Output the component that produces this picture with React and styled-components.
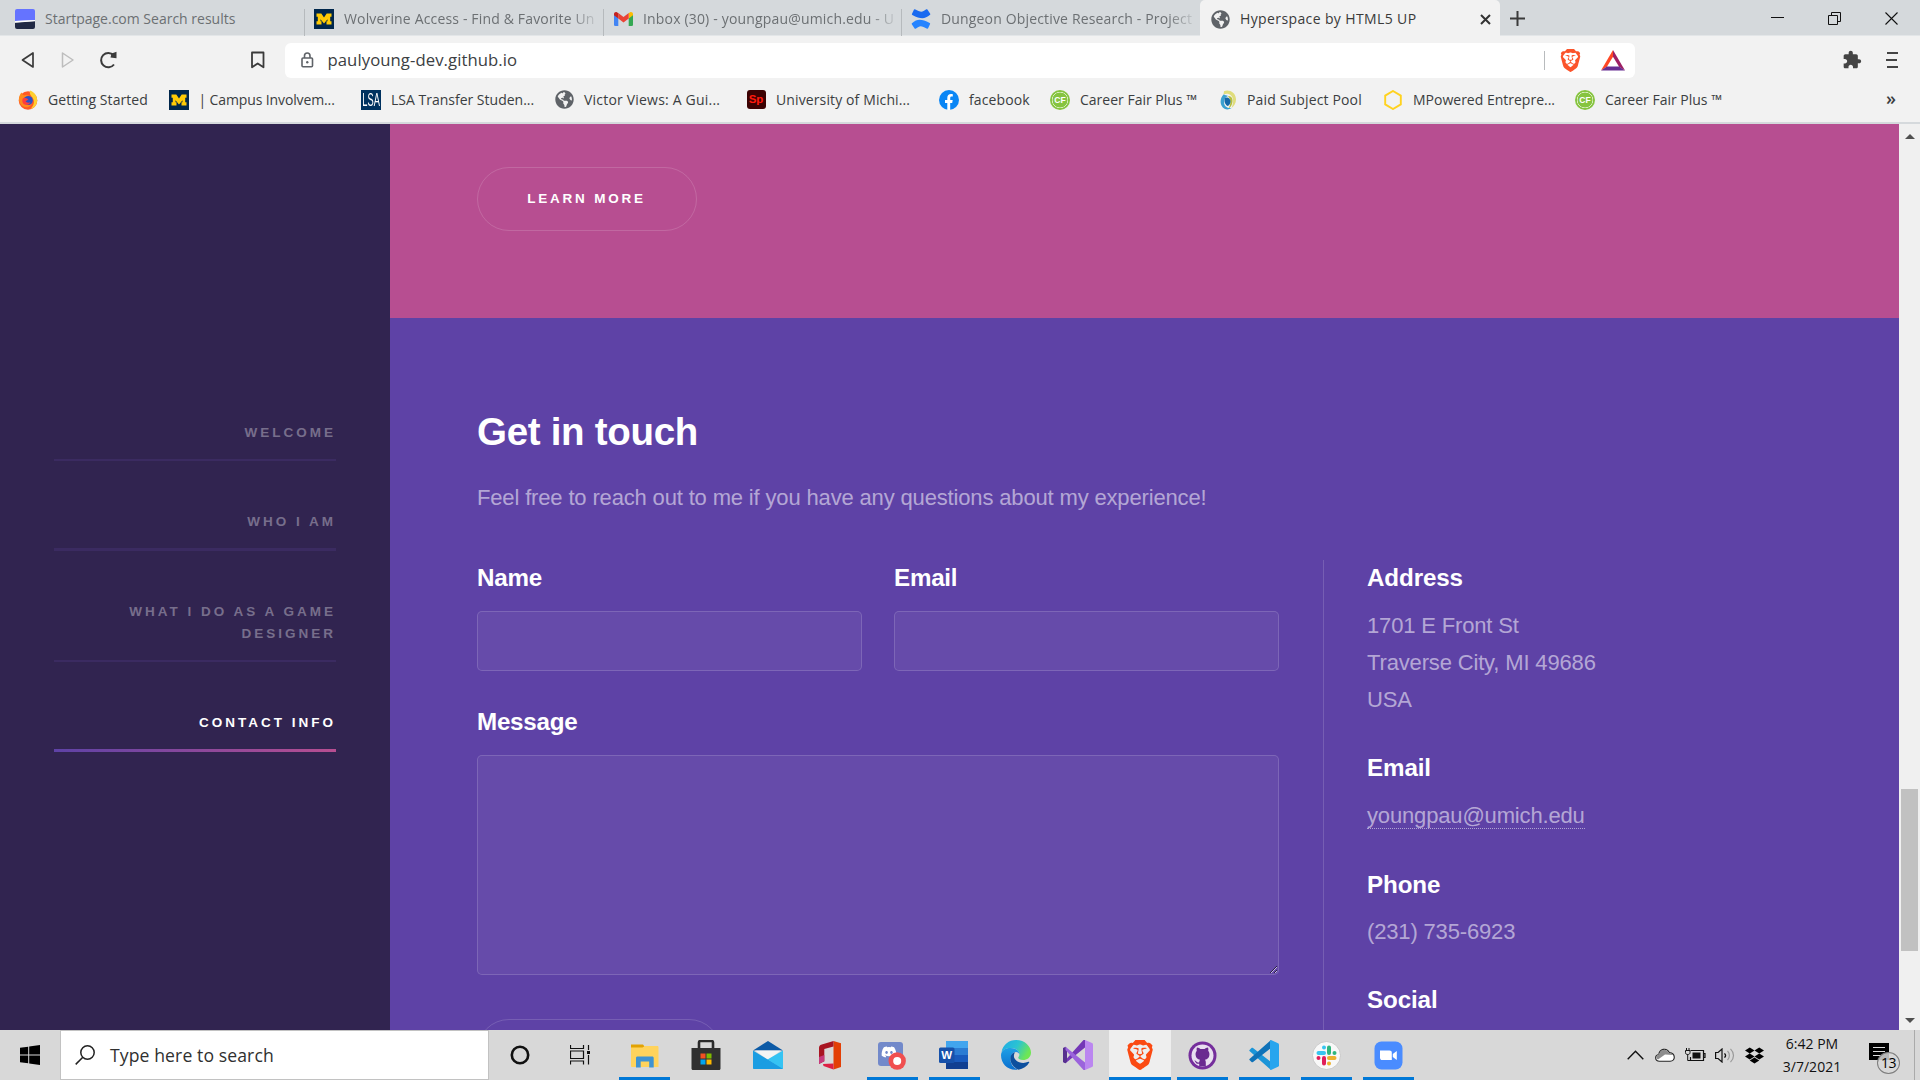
import React from "react";
import styled, { createGlobalStyle } from "styled-components";
import { FaDiscord, FaDropbox, FaGlobeAmericas } from "react-icons/fa";
import { SiBrave } from "react-icons/si";

const UI = `"Open Sans", "Noto Sans", sans-serif`;
const SITE = `"Liberation Sans", Arial, sans-serif`;

const Global = createGlobalStyle`
  * { box-sizing: border-box; }
  html, body { margin: 0; padding: 0; overflow: hidden; }
  svg { display: block; flex: none; }
`;

const Desktop = styled.div`
  display: flex;
  flex-direction: column;
  width: 1920px;
  height: 1080px;
  overflow: hidden;
  font-family: ${UI};
  background: #f2f2f2;
`;

/* ---------- tab strip ---------- */
const TabStrip = styled.div`
  display: flex;
  height: 36px;
  flex: none;
  background: #d5d9dc;
  box-shadow: inset 0 -1px 0 #e3e6e8;
`;
const Tab = styled.div`
  display: flex;
  align-items: center;
  width: ${(p) => p.$w}px;
  padding: 2px 0 0 ${(p) => p.$pl}px;
  font-size: 14px;
  color: #6c7073;
`;
const TabDivider = styled.div`
  width: 1px;
  height: 27px;
  margin-top: 9px;
  background: #b6babd;
`;
const ActiveTab = styled(Tab)`
  background: #f2f2f2;
  border-radius: 5px 5px 0 0;
  color: #3a3a3a;
  svg:last-child { margin-left: auto; margin-right: 9px; }
`;
const TabTitle = styled.span`
  margin-left: 10px;
  white-space: nowrap;
  line-height: 22px;
  letter-spacing: ${(p) => p.$ls || 0}px;
  ${(p) => p.$fade && "mask-image: linear-gradient(90deg, #000 90%, rgba(0,0,0,.2) 100%);"}
`;
const Strip = styled.div`
  display: flex;
  align-items: center;
  flex: 1;
  padding: 1px 22px 0 9px;
`;
const WindowButtons = styled.div`
  display: flex;
  gap: 44px;
  margin-left: auto;
`;

/* ---------- toolbar ---------- */
const Toolbar = styled.div`
  display: flex;
  align-items: center;
  height: 48px;
  flex: none;
  padding: 0 22px 0 20px;
`;
const NavButtons = styled.div`
  display: flex;
  align-items: center;
  width: 265px;
`;
const Slot = styled.div`
  display: flex;
  width: ${(p) => p.$w}px;
`;
const AddressBar = styled.div`
  display: flex;
  align-items: center;
  width: 1350px;
  height: 35px;
  padding: 0 10px 0 15px;
  background: #fff;
  border-radius: 6px;
`;
const Url = styled.span`
  margin-left: 12.5px;
  flex: 1;
  font-size: 16.7px;
  letter-spacing: 0.07px;
  line-height: 24px;
  color: #3c4043;
`;
const UrlDivider = styled.div`
  width: 1px;
  height: 19px;
  background: #b8bbbd;
  margin-right: 14px;
`;
const ToolbarEnd = styled.div`
  display: flex;
  align-items: center;
  gap: 24px;
  margin-left: auto;
`;

/* ---------- bookmarks ---------- */
const Bookmarks = styled.div`
  display: flex;
  align-items: center;
  height: 40px;
  flex: none;
  padding: 0 0 7px 18px;
  border-bottom: 2px solid #d5d9dc;
  font-size: 14px;
  color: #3b3e41;
`;
const Bookmark = styled.div`
  display: flex;
  align-items: center;
  gap: ${(p) => p.$gap || 10}px;
  width: ${(p) => p.$w}px;
  white-space: nowrap;
  letter-spacing: ${(p) => p.$ls || 0}px;
  line-height: 22px;
`;
const More = styled.span`
  margin-left: auto;
  margin-right: 24px;
  font-size: 18px;
  font-weight: 600;
  line-height: 18px;
  padding-bottom: 3px;
`;
const LetterTile = styled.span`
  display: flex;
  align-items: center;
  justify-content: center;
  width: ${(p) => p.$s || 20}px;
  height: ${(p) => p.$s || 20}px;
  flex: none;
  border-radius: ${(p) => p.$r || 0}px;
  background: ${(p) => p.$bg};
  color: ${(p) => p.$c};
  font: ${(p) => p.$font};
  letter-spacing: 0;
`;
const Condensed = styled.span`
  transform: scale(0.58, 1.2);
`;

/* ---------- page ---------- */
const Page = styled.div`
  display: flex;
  flex: 1;
  min-height: 0;
  font-family: ${SITE};
`;
const Sidebar = styled.nav`
  width: 390px;
  flex: none;
  background: #312450;
  padding: 298px 54px 0;
  display: flex;
  flex-direction: column;
  gap: 50px;
`;
const NavLink = styled.a`
  display: block;
  text-align: right;
  text-transform: uppercase;
  font-size: 13.5px;
  font-weight: 700;
  letter-spacing: 3px;
  line-height: 22px;
  color: ${(p) => (p.$active ? "#fff" : "rgba(255,255,255,.35)")};
  &::after {
    content: "";
    display: block;
    margin-top: 15px;
    height: ${(p) => p.$line}px;
    background: ${(p) => (p.$active ? "linear-gradient(to right, #5e42a6, #b74e91)" : "#3b2b61")};
  }
`;
const Main = styled.main`
  flex: 1;
  display: flex;
  flex-direction: column;
  overflow: hidden;
`;
const PinkSection = styled.section`
  height: 194px;
  flex: none;
  padding: 43px 87px;
  background: #b74e91;
`;
const PillButton = styled.button`
  display: flex;
  align-items: center;
  justify-content: center;
  width: ${(p) => p.$w}px;
  height: 64px;
  flex: none;
  padding: 0 1px 1px 0;
  border: 1px solid rgba(255, 255, 255, 0.15);
  border-radius: 32px;
  background: transparent;
  color: #fff;
  font: 700 13.5px/20px ${SITE};
  letter-spacing: 2.78px;
  text-transform: uppercase;
`;
const ContactSection = styled.section`
  flex: 1;
  min-height: 0;
  padding: 90px 87px 0;
  background: #5e42a6;
  color: rgba(255, 255, 255, 0.55);
  font-size: 22px;
  letter-spacing: -0.155px;
  line-height: 37px;
`;
const Heading = styled.h2`
  margin: 0;
  color: #fff;
  font-size: 38.5px;
  letter-spacing: -0.29px;
  line-height: 48px;
`;
const Intro = styled.p`
  margin: 23px 0 44px;
`;
const Columns = styled.div`
  display: flex;
  gap: 44px;
`;
const Form = styled.form`
  width: 802px;
  display: flex;
  flex-direction: column;
  gap: 33px;
`;
const FieldRow = styled.div`
  display: grid;
  grid-template-columns: 1fr 1fr;
  gap: 32px;
`;
const Field = styled.label`
  display: flex;
  flex-direction: column;
  gap: 15px;
  color: #fff;
  font-size: 24.2px;
  letter-spacing: -0.25px;
  font-weight: 700;
  line-height: 36px;
`;
const Input = styled.input`
  height: 60px;
  width: 100%;
  border: 1px solid rgba(255, 255, 255, 0.15);
  border-radius: 5px;
  background: rgba(255, 255, 255, 0.05);
  outline: 0;
`;
const TextArea = styled.textarea`
  height: 220px;
  width: 100%;
  border: 1px solid rgba(255, 255, 255, 0.15);
  border-radius: 5px;
  background: rgba(255, 255, 255, 0.05);
  outline: 0;
`;
const SubmitRow = styled.div`
  margin-top: 11px;
`;
const Details = styled.div`
  display: flex;
  flex-direction: column;
  height: 480px;
  border-left: 1px solid rgba(255, 255, 255, 0.15);
  padding-left: 43px;
`;
const Detail = styled.div`
  margin-bottom: ${(p) => p.$gap || 32.5}px;
`;
const DetailTitle = styled.h3`
  margin: 0 0 ${(p) => p.$mb || 10.5}px;
  color: #fff;
  font-size: 24.2px;
  letter-spacing: -0.13px;
  line-height: 36px;
`;
const MailLink = styled.a`
  border-bottom: 1px dotted rgba(255, 255, 255, 0.5);
`;

const Scrollbar = styled.div`
  width: 21px;
  flex: none;
  display: flex;
  flex-direction: column;
  align-items: center;
  background: #f0f0f0;
  padding: 10px 0 7px;
`;
const Thumb = styled.div`
  width: 17px;
  height: 162px;
  margin: 650px 0 auto;
  background: #c1c1c1;
`;

/* ---------- taskbar ---------- */
const Taskbar = styled.div`
  display: flex;
  height: 50px;
  flex: none;
  background: #d8d8d8;
  align-items: stretch;
`;
const StartButton = styled.div`
  width: 60px;
  display: flex;
  align-items: center;
  padding-left: 20px;
`;
const SearchBox = styled.div`
  width: 429px;
  display: flex;
  align-items: center;
  gap: 15px;
  padding: 0 0 0 14px;
  border: 1px solid #c2c2c2;
  background: #fff;
  color: #303030;
  font-size: 17.6px;
  letter-spacing: 0.1px;
  line-height: 24px;
`;
const TaskCell = styled.div`
  width: ${(p) => p.$w || 62}px;
  margin-right: ${(p) => p.$mr || 0}px;
  display: flex;
  align-items: center;
  justify-content: center;
  background: ${(p) => (p.$active ? "#eeeeee" : "transparent")};
  box-shadow: ${(p) => (p.$active ? "inset 0 -3px 0 #0078d7" : "none")};
`;
const Running = styled.div`
  display: flex;
  align-items: center;
  justify-content: center;
  width: 51px;
  height: 100%;
  box-shadow: inset 0 -3px 0 #0078d7;
`;
const Tray = styled.div`
  display: flex;
  align-items: center;
  margin-left: auto;
  padding-right: 5px;
`;
const TrayIcon = styled.div`
  display: flex;
  width: ${(p) => p.$w}px;
`;
const Clock = styled.div`
  width: 64px;
  margin-left: 16px;
  text-align: center;
  font-size: 14px;
  line-height: 23.5px;
  color: #111;
  white-space: nowrap;
`;
const Notice = styled.div`
  position: relative;
  width: 32px;
  height: 24px;
  margin-left: 25px;
  margin-right: 13px;
`;
const Badge = styled.span`
  position: absolute;
  left: 8px;
  top: 9px;
  width: 23px;
  height: 22px;
  border: 1px solid #7d7d7d;
  border-radius: 50%;
  background: rgba(216, 216, 216, 0.85);
  color: #000;
  font-size: 14px;
  letter-spacing: -0.5px;
  line-height: 20px;
  text-align: center;
`;
const ShowDesktop = styled.div`
  width: 1px;
  height: 50px;
  background: #aaa;
`;

/* ---------- drawings ---------- */
const Svg = ({ w, h = w, box = `0 0 ${w} ${h}`, children, ...r }) => (
  <svg width={w} height={h} viewBox={box} fill="none" {...r}>{children}</svg>
);
const StartpageIcon = () => (
  <Svg w={20}>
    <path d="M0 12V2a2 2 0 012-2h16a2 2 0 012 2v9z" fill="#6573ff" />
    <path d="M0 13.500L20 12V18a2 2 0 01-2 2H2a2 2 0 01-2-2z" fill="#202945" />
    <path d="M0 12L20 11v1.300L0 13.800z" fill="#fff" />
  </Svg>
);
const MichiganIcon = () => (
  <Svg w={20}>
    <path d="M0 0h20v20H0z" fill="#00274c" />
    <path d="M2.500 4.500h4.800L10 8.600l2.700-4.100h4.800v3.200h-1.300v4.600h1.300v3.200h-5v-3.200h1V10.200L10 14.500 6.500 10.200v2.100h1v3.200h-5v-3.200h1.300V7.700H2.500z" fill="#ffcb05" />
  </Svg>
);
const GmailIcon = () => (
  <Svg w={19} h={14}>
    <path d="M0 2v10.700A1.300 1.300 0 001.300 14H4.300V6z" fill="#4285f4" />
    <path d="M19 2v10.700A1.300 1.300 0 0117.700 14H14.700V6z" fill="#34a853" />
    <path d="M14.700 1.100V6.500L19 3.200V2c0-1.700-1.900-2.500-3.100-1.600z" fill="#fbbc04" />
    <path d="M4.300 6.500V1.100L9.500 5l5.200-3.900v5.400L9.500 10.400z" fill="#ea4335" />
    <path d="M0 2v1.200l4.300 3.300V1.100L3.100.4C1.900-.5 0 .3 0 2z" fill="#c5221f" />
  </Svg>
);
const ConfluenceIcon = () => (
  <Svg w={20}>
    <path d="M.8 15.200l2.800 4.300c.3.400.7.500 1.100.2C8 17.500 9 16.500 12.500 18l3.600 1.700c.4.200.9 0 1-.400l2-4.200c.2-.400 0-.8-.4-1C10.500 10 6.500 9.500.9 14.300c-.3.300-.3.600-.1.900z" fill="#2684ff" />
    <path d="M19.200 4.800L16.400.5c-.3-.4-.7-.5-1.100-.2C12 2.500 11 3.500 7.500 2L3.900.3c-.4-.2-.9 0-1 .4l-2 4.200c-.2.400 0 .8.4 1C9.500 10 13.500 10.500 19.100 5.700c.3-.3.300-.6.100-.9z" fill="#1a6af0" />
  </Svg>
);
const FirefoxIcon = () => (
  <Svg w={20}>
    <circle cx="10" cy="10.500" r="9.300" fill="#ff5a26" />
    <path d="M12 .5c5 2 7.300 6 7.200 10-.2 4-2.500 7.500-6.700 8.500 3-3 4.500-7 2.500-10.500C13.500 6 11 4 12 .5z" fill="#ffcf2e" />
    <path d="M1 8C1.500 5.500 2 4 3.500 2.500 4 4 5 5 6.500 5.500c2-1 5 0 6.500 2s2 6-1 8.500-8 1-9.500-2S.7 10 1 8z" fill="#ff8a1d" />
    <circle cx="10.200" cy="10.500" r="4.600" fill="#2c52c9" />
    <path d="M5 8.200c2-.6 3.500 0 5.500 1-1 .5-1.500 1.300-3 1.800 1 2 3.500 2 5 1-1 3-5 4-7.300 1.500C4 12 4 9.500 5 8.200z" fill="#ff3d3d" />
  </Svg>
);
const FacebookIcon = () => (
  <Svg w={20}>
    <circle cx="10" cy="10" r="10" fill="#0a86f5" />
    <path d="M8.300 20v-7H6v-3h2.300V8c0-2.600 1.400-4 3.700-4 .9 0 1.800.2 1.800.2v2.400h-1.200c-1.100 0-1.400.7-1.400 1.400v2h2.500l-.5 3h-2v7z" fill="#fff" />
  </Svg>
);
const SwirlIcon = () => (
  <Svg w={18} h={20} box="1 0 18 20">
    <path d="M6 1.200C11-.8 17.500 2 18 9c.2 4-2 7-4.500 9C15.500 13 16 8.500 13 5.500 11 3.500 8 3.500 5.500 4.500z" fill="#e0dd7c" />
    <path d="M10 6c4-.5 5.500 4 4 8-.7 2-2 3.500-3.500 4.500C13 14 13 10 10 6z" fill="#b7bf3f" />
    <path d="M5.500 4.500C1.500 8.500 1.500 15.500 6.500 18.800c2.500 1 5 .7 7-.8-4.500.5-7.500-2-7.500-6 0-3 1.500-5 4-6-1.500-.8-3-.9-4.500-1.500z" fill="#3ba0cf" />
    <path d="M6.800 8c2.700-1.700 5.700.3 5.700 3.500 0 2.300-1.500 4-3 4.500-2.200-1.500-3.700-4-2.700-8z" fill="#1668a8" />
  </Svg>
);
const HexIcon = () => (
  <Svg w={20}><path d="M10 1l7.800 4.600v8.800L10 19l-7.800-4.600V5.600z" stroke="#ffd21f" strokeWidth="1.900" /></Svg>
);
const CareerIcon = () => (
  <LetterTile $bg="radial-gradient(circle, #86c440 0 7.300px, #d5ebba 7.600px 8px, #86c440 8.400px)" $c="#fff" $r={10} $font={`700 8.500px/20px ${SITE}`}>CF</LetterTile>
);
const BatIcon = () => (
  <Svg w={24} h={21}>
    <path d="M12 0v6.800L5.900 16.800 0 20.500z" fill="#ff4724" />
    <path d="M12 0l12 20.500-5.900-3.700L12 6.800z" fill="#9e1f63" />
    <path d="M0 20.500l5.900-4h12.200l5.900 4z" fill="#662d91" />
  </Svg>
);
const ExtensionIcon = () => (
  <Svg w={20} box="0 0 24 24">
    <path d="M20.500 11H19V7c0-1.100-.9-2-2-2h-4V3.500C13 2.120 11.880 1 10.500 1S8 2.120 8 3.500V5H4c-1.100 0-1.990.9-1.990 2v3.800H3.500c1.490 0 2.700 1.210 2.700 2.700s-1.210 2.700-2.700 2.700H2V20c0 1.100.9 2 2 2h3.800v-1.500c0-1.490 1.210-2.700 2.700-2.700 1.490 0 2.700 1.210 2.700 2.700V22H17c1.100 0 2-.9 2-2v-4h1.500c1.380 0 2.500-1.120 2.500-2.500S21.880 11 20.500 11z" fill="#444" />
  </Svg>
);
const FolderIcon = () => (
  <Svg w={29} h={25}>
    <path d="M1 1.500h12l1.500 2-1 2H1z" fill="#e2a203" />
    <path d="M1 4.500h11.500L15 3h12.500c.5 0 1 .5 1 1v20H2c-.5 0-1-.5-1-1z" fill="#ffd35c" />
    <path d="M6 24.500V15c0-1 .6-1.500 1.500-1.500h14.700c.9 0 1.500.5 1.500 1.500v9.500h-4.500v-6h-8.500v6z" fill="#3f93d2" />
  </Svg>
);
const StoreIcon = () => (
  <Svg w={30}>
    <path d="M8 9V2.500C8 1.500 8.500 1 9.500 1h11c1 0 1.500.5 1.500 1.500V9" stroke="#2a2a2a" strokeWidth="2.600" />
    <path d="M.5 8h29v20.500c0 .8-.5 1.500-1.500 1.500H2c-1 0-1.500-.7-1.500-1.500z" fill="#303030" />
    <path d="M9.500 13.500h5v5h-5z" fill="#f25022" /><path d="M15.500 13.500h5v5h-5z" fill="#7fba00" />
    <path d="M9.500 19.500h5v5h-5z" fill="#00a4ef" /><path d="M15.500 19.500h5v5h-5z" fill="#ffb900" />
  </Svg>
);
const MailIcon = () => (
  <Svg w={30} h={28}>
    <path d="M0 9.500L15 0l15 9.500z" fill="#0c5aa6" />
    <path d="M2 9.500h26L15 19z" fill="#f4f4f4" />
    <path d="M0 9.500L30 28H1c-.6 0-1-.4-1-1z" fill="#1b9de2" />
    <path d="M30 9.500v17.500c0 .6-.4 1-1 1L14.500 18.500z" fill="#35c3f3" />
    <path d="M14.500 18.500L30 28H1z" fill="#1b9de2" />
  </Svg>
);
const OfficeIcon = () => (
  <Svg w={24} h={29}>
    <path d="M15.500 0L23 2.300V26l-7.500 2.500z" fill="#e33f05" />
    <path d="M15.500 0v5.500L6.300 8v12.200L1 23V7c0-1.500.7-2.600 2-3.200z" fill="#a81522" />
    <path d="M6.300 14v6.200L1 23V16z" fill="#c73b7e" />
    <path d="M5 23l10.500-.5v6L5.500 25z" fill="#dd2044" />
  </Svg>
);
const DiscordIcon = () => (
  <Svg w={28} h={30}>
    <rect x="0" y="2" width="25" height="24" rx="3" fill="#7289ca" />
    <FaDiscord x="3" y="4" width="18" height="18" color="#fff" />
    <circle cx="19.200" cy="21" r="8.700" fill="#f04f4f" />
    <circle cx="19.200" cy="21" r="4" fill="#fff" />
  </Svg>
);
const WordIcon = () => (
  <Svg w={30} h={28}>
    <path d="M7 0h22v7.500H7z" fill="#41a5ee" /><path d="M7 7h22v7H7z" fill="#2b7cd3" />
    <path d="M7 14h22v7H7z" fill="#185abd" /><path d="M7 21h22v7H7z" fill="#103f91" />
    <rect x="0" y="6.500" width="15.500" height="15.500" rx="1.500" fill="#1651aa" />
    <text x="7.750" y="18.300" textAnchor="middle" fontFamily="Liberation Sans" fontWeight="700" fontSize="11.500" fill="#fff">W</text>
  </Svg>
);
const EdgeIcon = () => (
  <Svg w={30}>
    <defs>
      <linearGradient id="eg" x1="0" y1="0" x2="1" y2=".4"><stop offset="0" stopColor="#1fa9e8" /><stop offset=".55" stopColor="#2bc3d2" /><stop offset="1" stopColor="#6ee654" /></linearGradient>
      <linearGradient id="eb" x1="0" y1="0" x2="0" y2="1"><stop offset="0" stopColor="#1fa0e6" /><stop offset="1" stopColor="#0b6fcf" /></linearGradient>
    </defs>
    <path d="M.5 12C2 4.500 8 0 15 0c9 0 15 6.500 15 12.500 0 5-4 7.500-8 7.500-3 0-4.800-1.200-4.800-2.200 0-.8 1.200-1.300 1.200-3.600C18.400 11 15 8 10 8 5 8 1.500 10.500.5 12z" fill="url(#eg)" />
    <path d="M0 15C0 10.500 4.500 8 9.500 8c5.500 0 8.900 3.200 8.900 6.200-.8-1.400-2-2.200-3.400-2.200-3 0-5.500 3-5.500 7.500 0 4.500 3 8.500 7.500 10C7 31 0 24 0 15z" fill="url(#eb)" />
    <path d="M9.500 17c-1 5.500 3 10.500 8 12.700C22 29 26 26.500 28.200 22.500c.3-.6-.2-1-.8-.7-5.400 2.500-12 .7-14.200-4-.6-1.600-.3-4 1-5.600C12 12.500 10 14.500 9.500 17z" fill="#0d4f9e" />
  </Svg>
);
const VisualStudioIcon = () => (
  <Svg w={30}>
    <path d="M22 0l7 3c.6.300 1 .8 1 1.500v21c0 .7-.4 1.200-1 1.500l-7 3z" fill="#bb86f0" />
    <path d="M0 22l2.500 1.300L22 7.500V0h-1.500L2.500 20z" fill="#7437b7" />
    <path d="M0 8l2.500-1.300 1.500 1.800v13l-1.500 1.800L0 22z" fill="#57308f" />
    <path d="M2.500 6.700L22 22.500V30h-1.500L2.500 10z" fill="#9b63dc" />
  </Svg>
);
const VSCodeIcon = () => (
  <Svg w={30}>
    <path d="M.5 10l2-2c.4-.4 1-.4 1.500 0L22 22v8L.5 11c-.3-.3-.3-.7 0-1z" fill="#1b95d8" />
    <path d="M.5 20l2 2c.4.400 1 .4 1.500 0L22 8V0L.5 19c-.3.300-.3.700 0 1z" fill="#0f72b8" />
    <path d="M22 0l7 3.200c.6.300 1 .8 1 1.500v20.600c0 .7-.4 1.200-1 1.500L22 30l-1-1V1z" fill="#27a5ee" />
  </Svg>
);
const GithubDesktopIcon = () => (
  <Svg w={29}>
    <circle cx="14.500" cy="14.500" r="14" fill="#752e9c" />
    <circle cx="14.500" cy="14.500" r="11" fill="#e9dff0" />
    <path d="M9 6.500c1.500.2 2.700.9 3.400 1.500h4.200c.7-.6 1.900-1.300 3.400-1.500.5 1.300.5 2.300.2 3.200 1 1.300 1.400 2.600 1.200 4.300-.3 3-2 4.300-4.400 4.700.6.700.8 1.500.8 2.500v4h-6.600v-2.500c-2 .3-3-.2-3.800-1.800-.3-.6-.8-1-1.200-1.400 1.900-.3 2.300 2 4 2 .4 0 .8 0 1-.2.1-1.100.3-1.900.8-2.600-2.400-.400-4.100-1.700-4.400-4.700-.2-1.700.2-3 1.200-4.300-.3-.9-.3-1.900.2-3.200z" fill="#6a2a90" />
  </Svg>
);
const SlackIcon = () => (
  <Svg w={29}>
    <circle cx="14.500" cy="14.500" r="14" fill="#f8f8f8" stroke="#c9c9c9" />
    <g strokeWidth="4" strokeLinecap="round">
      <path d="M12 6.500v0M6.500 12H12" stroke="#36c5f0" /><path d="M17 6.500v5.500M22.500 12v0" stroke="#2eb67d" />
      <path d="M17 17h5.500M17 22.500v0" stroke="#ecb22e" /><path d="M12 17v5.500M6.500 17v0" stroke="#e01e5a" />
    </g>
  </Svg>
);
const ZoomIcon = () => (
  <Svg w={29}>
    <rect x=".5" y=".5" width="28" height="28" rx="7" fill="#4a8cff" />
    <path d="M6 9.500h9.500c1.400 0 2.300.9 2.300 2.300v7.200H8.300C6.900 19 6 18.100 6 16.700z" fill="#fff" />
    <path d="M18.800 13l4-3v9l-4-3z" fill="#fff" />
  </Svg>
);

const BOOKMARKS = [
  { label: "Getting Started", icon: <FirefoxIcon />, w: 151, ls: 0.06 },
  { label: "| Campus Involvem...", icon: <MichiganIcon />, w: 192, ls: -0.12, gap: 9.5 },
  { label: "LSA Transfer Studen...", icon: <LetterTile $bg="#00325f" $c="#fff" $font={`400 16px/20px ${SITE}`}><Condensed>LSA</Condensed></LetterTile>, w: 194 },
  { label: "Victor Views: A Gui...", icon: <FaGlobeAmericas size={19} color="#5f6368" />, w: 191.5, ls: 0.2 },
  { label: "University of Michi...", icon: <LetterTile $bg="#3c0203" $c="#ff1a0d" $s={19} $r={3} $font={`700 11.500px/19px ${SITE}`}>Sp</LetterTile>, w: 192.5, ls: 0.12, gap: 10.5 },
  { label: "facebook", icon: <FacebookIcon />, w: 111, ls: 0.12 },
  { label: "Career Fair Plus ™", icon: <CareerIcon />, w: 169 },
  { label: "Paid Subject Pool", icon: <SwirlIcon />, w: 164, ls: 0.15 },
  { label: "MPowered Entrepre...", icon: <HexIcon />, w: 192 },
  { label: "Career Fair Plus ™", icon: <CareerIcon />, w: 170 },
];

const APPS = [
  { icon: <FolderIcon />, run: true }, { icon: <StoreIcon /> }, { icon: <MailIcon /> }, { icon: <OfficeIcon /> },
  { icon: <DiscordIcon />, run: true }, { icon: <WordIcon />, run: true }, { icon: <EdgeIcon /> }, { icon: <VisualStudioIcon /> },
  { icon: <SiBrave size={30} color="#fb4a12" />, active: true }, { icon: <GithubDesktopIcon />, run: true },
  { icon: <VSCodeIcon />, run: true }, { icon: <SlackIcon />, run: true }, { icon: <ZoomIcon />, run: true },
];

export default function App() {
  return (
    <Desktop>
      <Global />
      <TabStrip>
        <Tab $w={304} $pl={15}><StartpageIcon /><TabTitle>Startpage.com Search results</TabTitle></Tab>
        <TabDivider />
        <Tab $w={298} $pl={9}><MichiganIcon /><TabTitle $ls={0.16} $fade>Wolverine Access - Find &amp; Favorite Un</TabTitle></Tab>
        <TabDivider />
        <Tab $w={297} $pl={10}><GmailIcon /><TabTitle $ls={0.17} $fade>Inbox (30) - youngpau@umich.edu - U</TabTitle></Tab>
        <TabDivider />
        <Tab $w={298} $pl={9}><ConfluenceIcon /><TabTitle $ls={0.16} $fade>Dungeon Objective Research - Project</TabTitle></Tab>
        <ActiveTab $w={300} $pl={11}>
          <FaGlobeAmericas size={19} color="#5f6368" /><TabTitle $ls={0.38}>Hyperspace by HTML5 UP</TabTitle>
          <Svg w={11}><path d="M1 1l9 9M10 1l-9 9" stroke="#333" strokeWidth="2" /></Svg>
        </ActiveTab>
        <Strip>
          <Svg w={17}><path d="M8.500 1v15M1 8.500h15" stroke="#3a3a3a" strokeWidth="2" /></Svg>
          <WindowButtons>
            <Svg w={13}><path d="M0 5.500h13" stroke="#111" /></Svg>
            <Svg w={13} h={13}><path d="M.5 3.500h9v9h-9zM3.500 3.500v-3h9v9h-3" stroke="#111" /></Svg>
            <Svg w={13}><path d="M.5.500l12 12M12.500.500l-12 12" stroke="#111" strokeWidth="1.100" /></Svg>
          </WindowButtons>
        </Strip>
      </TabStrip>
      <Toolbar>
        <NavButtons>
          <Slot $w={40}><Svg w={16} h={18}><path d="M13 2v14L2.500 9z" stroke="#3b3b3b" strokeWidth="1.700" strokeLinejoin="round" /></Svg></Slot>
          <Slot $w={39}><Svg w={16} h={18}><path d="M2.500 2v14L13 9z" stroke="#bdbdbd" strokeWidth="1.500" strokeLinejoin="round" /></Svg></Slot>
          <Slot $w={150}><Svg w={19} h={18}><path d="M15 13.500A7.200 7.200 0 1 1 14.600 4.200" stroke="#3b3b3b" strokeWidth="2" /><path d="M11.500 6.500L12.500 2.500 17.500.8v6.500z" fill="#3b3b3b" /></Svg></Slot>
          <Slot $w={30}><Svg w={18} h={18}><path d="M3 1.500h11.500v14.800L8.700 12.400 3 16.300z" stroke="#3b3b3b" strokeWidth="1.800" strokeLinejoin="round" /></Svg></Slot>
        </NavButtons>
        <AddressBar>
          <Svg w={15} h={16}><rect x="2" y="6" width="10.500" height="8.700" rx="1" stroke="#5f6368" strokeWidth="1.600" /><path d="M4.500 6V3.800a2.750 2.750 0 015.500 0V6" stroke="#5f6368" strokeWidth="1.600" /><circle cx="7.250" cy="10.300" r="1.200" fill="#5f6368" /></Svg>
          <Url>paulyoung-dev.github.io</Url>
          <UrlDivider />
          <SiBrave size={23} color="#fb542b" />
          <Slot $w={19} />
          <BatIcon />
        </AddressBar>
        <ToolbarEnd>
          <ExtensionIcon />
          <Svg w={12} h={18}><path d="M1 2h11M0 9h11M1 16h11" stroke="#444" strokeWidth="2" /></Svg>
        </ToolbarEnd>
      </Toolbar>
      <Bookmarks>
        {BOOKMARKS.map((b, i) => (
          <Bookmark key={i} $w={b.w} $ls={b.ls} $gap={b.gap}>{b.icon}<span>{b.label}</span></Bookmark>
        ))}
        <More>»</More>
      </Bookmarks>

      <Page>
        <Sidebar>
          <NavLink $line={2}>Welcome</NavLink>
          <NavLink $line={3}>Who I am</NavLink>
          <NavLink $line={2}>What I do as a Game Designer</NavLink>
          <NavLink $line={3} $active>Contact Info</NavLink>
        </Sidebar>
        <Main>
          <PinkSection><PillButton $w={220}>Learn more</PillButton></PinkSection>
          <ContactSection>
            <Heading>Get in touch</Heading>
            <Intro>Feel free to reach out to me if you have any questions about my experience!</Intro>
            <Columns>
              <Form>
                <FieldRow>
                  <Field>Name<Input /></Field>
                  <Field>Email<Input /></Field>
                </FieldRow>
                <Field>Message<TextArea /></Field>
                <SubmitRow><PillButton $w={244} type="button" /></SubmitRow>
              </Form>
              <Details>
                <Detail $gap={32}><DetailTitle $mb={11}>Address</DetailTitle>1701 E Front St<br />Traverse City, MI 49686<br />USA</Detail>
                <Detail $gap={33}><DetailTitle>Email</DetailTitle><MailLink>youngpau@umich.edu</MailLink></Detail>
                <Detail><DetailTitle $mb={10}>Phone</DetailTitle>(231) 735-6923</Detail>
                <Detail><DetailTitle>Social</DetailTitle></Detail>
              </Details>
            </Columns>
          </ContactSection>
        </Main>
        <Scrollbar>
          <Svg w={10} h={5}><path d="M0 5l5-5 5 5z" fill="#505050" /></Svg>
          <Thumb />
          <Svg w={10} h={5}><path d="M0 0l5 5 5-5z" fill="#505050" /></Svg>
        </Scrollbar>
      </Page>

      <Taskbar>
        <StartButton>
          <Svg w={20}><path d="M0 2.800L8.200 1.700v7.800H0zM9.200 1.500L20 0v9.500H9.200zM0 10.500h8.200v7.800L0 17.200zM9.200 10.500H20V20L9.200 18.500z" fill="#000" /></Svg>
        </StartButton>
        <SearchBox>
          <Svg w={20}><circle cx="12.500" cy="7.500" r="6.700" stroke="#222" strokeWidth="1.500" /><path d="M7.800 12.300L.7 19.400" stroke="#222" strokeWidth="1.500" /></Svg>
          Type here to search
        </SearchBox>
        <TaskCell $w={62}><Svg w={20}><circle cx="10" cy="10" r="8.200" stroke="#111" strokeWidth="2.600" /></Svg></TaskCell>
        <TaskCell $w={58} $mr={4}>
          <Svg w={21} h={20}><path d="M.5 0v3.500h13V0M.5 19.500V16h13v3.500M.5 6h13v7.500H.5zM18.500 0v5M18.500 10v9.500" stroke="#111" strokeWidth="1.200" /><path d="M17 6h3v3h-3z" fill="#111" /></Svg>
        </TaskCell>
        {APPS.map((a, i) => (
          <TaskCell key={i} $active={a.active}>{a.run ? <Running>{a.icon}</Running> : a.icon}</TaskCell>
        ))}
        <Tray>
          <TrayIcon $w={28}><Svg w={17} h={10}><path d="M.7 9.300l7.800-8 7.800 8" stroke="#111" strokeWidth="1.400" /></Svg></TrayIcon>
          <TrayIcon $w={30}><Svg w={20} h={14}><path d="M4.500 13.300c-5 0-5-6.300-.7-6.800C4.500 1 11.500-1 14.300 4.600c6.500.4 6.500 8.700.8 8.700z" fill="#fff" stroke="#222" strokeWidth="1.100" /><path d="M4 6.300C5 1.400 11.500-.2 14 4.900c1.500 0 3 .6 4 2L10 6.500 3 11.500C0 10 1.500 6.700 4 6.300z" fill="#8d8d8d" /></Svg></TrayIcon>
          <TrayIcon $w={30}><Svg w={21} h={14}><path d="M5.500 2.500h13v10h-13V9M19 5.500h1v4h-1" stroke="#111" strokeWidth="1.200" /><path d="M7.500 4.500h8v6h-8z" fill="#111" /><path d="M1.500 0v2M4 0v2M.5 2.500h4.500v2C5 6 4 6.500 2.700 6.500S.5 6 .5 4.500zM2.700 6.500v6h3" stroke="#111" /></Svg></TrayIcon>
          <TrayIcon $w={30}><Svg w={21} h={15}><path d="M.6 4.500h2.500L7 1v13L3.100 10.500H.6z" stroke="#111" strokeWidth="1.200" /><path d="M9.500 5.300c1.300 1.300 1.300 3.100 0 4.400" stroke="#111" strokeWidth="1.200" /><path d="M12.500 3c2.500 2.500 2.500 6.500 0 9M15.500.8c4 4 4 9.400 0 13.400" stroke="#999" strokeWidth="1.200" /></Svg></TrayIcon>
          <FaDropbox size={19} color="#000" />
          <Clock>6:42 PM<br />3/7/2021</Clock>
          <Notice>
            <Svg w={20} h={18}><path d="M0 0h20v17H0z" fill="#000" /><path d="M4 4.500h12M4 8.500h12M4 12.500h8" stroke="#ddd" strokeWidth="1.100" /></Svg>
            <Badge>13</Badge>
          </Notice>
          <ShowDesktop />
        </Tray>
      </Taskbar>
    </Desktop>
  );
}
